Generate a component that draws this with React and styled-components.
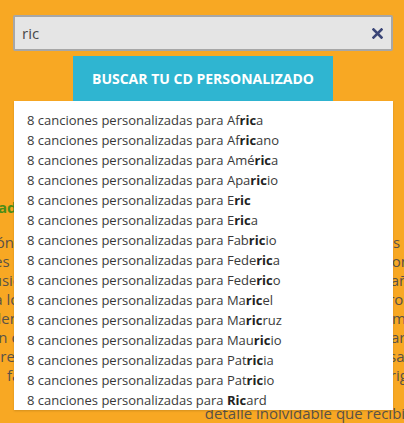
import styled, { createGlobalStyle } from 'styled-components'

const GlobalStyle = createGlobalStyle`
    html, body {
        margin: 0;
        padding: 0;
        background: #f8a823;
        overflow: hidden;
    }
    body {
        font-family: 'Open Sans', 'Liberation Sans', sans-serif;
    }
`

const names = [
    'Africa', 'Africano', 'América', 'Aparicio', 'Eric', 'Erica', 'Fabricio',
    'Federica', 'Federico', 'Maricel', 'Maricruz', 'Mauricio', 'Patricia',
    'Patricio', 'Ricard',
]

const query = 'ric'

const highlight = (name) => {
    const i = name.toLowerCase().indexOf(query)
    if (i < 0) return name
    return (
        <>
            {name.slice(0, i)}
            <b>{name.slice(i, i + query.length)}</b>
            {name.slice(i + query.length)}
        </>
    )
}

const App = () => {
    return (
        <>
            <GlobalStyle />
            <Page>
                <Search>
                    <Field>
                        <Input defaultValue="ric" autoFocus />
                        <Clear aria-label="Borrar">
                            <svg width="11" height="11" viewBox="0 0 11 11">
                                <path d="M1.5 1.5 L9.5 9.5 M9.5 1.5 L1.5 9.5" stroke="#3b4677" strokeWidth="2.6" strokeLinecap="square" />
                            </svg>
                        </Clear>
                    </Field>
                    <Button>Buscar tu CD personalizado</Button>
                    <Suggestions>
                        {names.map((n) => (
                            <Item key={n}>8 canciones personalizadas para {highlight(n)}</Item>
                        ))}
                    </Suggestions>
                </Search>
                <Content>
                    <Heading>Originalidad y emoción para cada ocasión especial</Heading>
                    <Text>
                        Una canción con el nombre de tu hijo, de tu pareja o de tu amigo es un regalo que nunca pasará de moda, y lo más importante es
                        que se recordará siempre. Cada CD incluye ocho canciones infantiles con el nombre de la persona que tú elijas, con música
                        alegre y letras pensadas para cada ocasión: cumpleaños, bautizos, comuniones, Navidad y mucho más. Sorprende a los tuyos con
                        un regalo diferente y lleno de emoción, producido en estudio con voces profesionales y una calidad excelente que
                        enamorará a pequeños y mayores desde la primera escucha, con una portada personalizada y su nombre en cada canción.
                        Los más pequeños disfrutarán al escuchar su propio nombre en cada tema, mientras los mayores recordarán con cariño este
                        momento tan especial en casa o en el coche, cantando juntos sus canciones favoritas.
                        Es el regalo perfecto para dar una sorpresa original, un recuerdo para toda la vida.
                        <br />
                        Es un
                        <br />
                        detalle inolvidable que recibirá hoy.
                    </Text>
                </Content>
            </Page>
        </>
    )
}

export default App

const Page = styled.div`
    width: 404px;
    height: 423px;
    overflow: hidden;
`

const Search = styled.div`
    position: relative;
    margin: 15px 11px 0 13px;
    display: flex;
    flex-direction: column;
`

const Field = styled.div`
    position: relative;
    height: 36px;
    box-sizing: border-box;
    border: 2px solid #a7a7a7;
    border-radius: 2px;
    background: #e5e5e5;
    display: flex;
    align-items: center;
`

const Input = styled.input`
    flex: 1;
    border: none;
    background: transparent;
    outline: none;
    padding: 0 0 0 7px;
    font-family: 'Open Sans', sans-serif;
    font-size: 15px;
    color: #484848;
    caret-color: #222;
`

const Clear = styled.span`
    display: flex;
    margin-right: 8px;
`

const Button = styled.div`
    align-self: flex-start;
    margin: 5px 0 0 60px;
    width: 260px;
    height: 45px;
    background: #2fb5d1;
    color: #fff;
    display: flex;
    align-items: center;
    justify-content: center;
    font-weight: 700;
    font-size: 14px;
    text-transform: uppercase;
`

const Suggestions = styled.ul`
    position: absolute;
    z-index: 10;
    top: 86px;
    left: 1px;
    width: 379px;
    margin: 0;
    padding: 9px 0 0;
    list-style: none;
    background: #fff;
    box-shadow: 0 1px 2px rgba(0, 0, 0, 0.15);
`

const Item = styled.li`
    height: 20px;
    line-height: 20px;
    padding-left: 13px;
    font-size: 13px;
    color: #3a3a3a;
    white-space: nowrap;
    b {
        font-weight: 700;
        color: #222;
    }
`

const Content = styled.div`
    margin: 96px 0 0 -96px;
    width: 850px;
    text-align: center;
`

const Heading = styled.h2`
    margin: 0 0 16px;
    padding-left: 20px;
    text-align: left;
    font-size: 15px;
    font-weight: 700;
    color: #4b8d17;
    line-height: 20px;
`

const Text = styled.p`
    margin: 0;
    font-size: 15px;
    line-height: 19px;
    color: #5a5247;
`
